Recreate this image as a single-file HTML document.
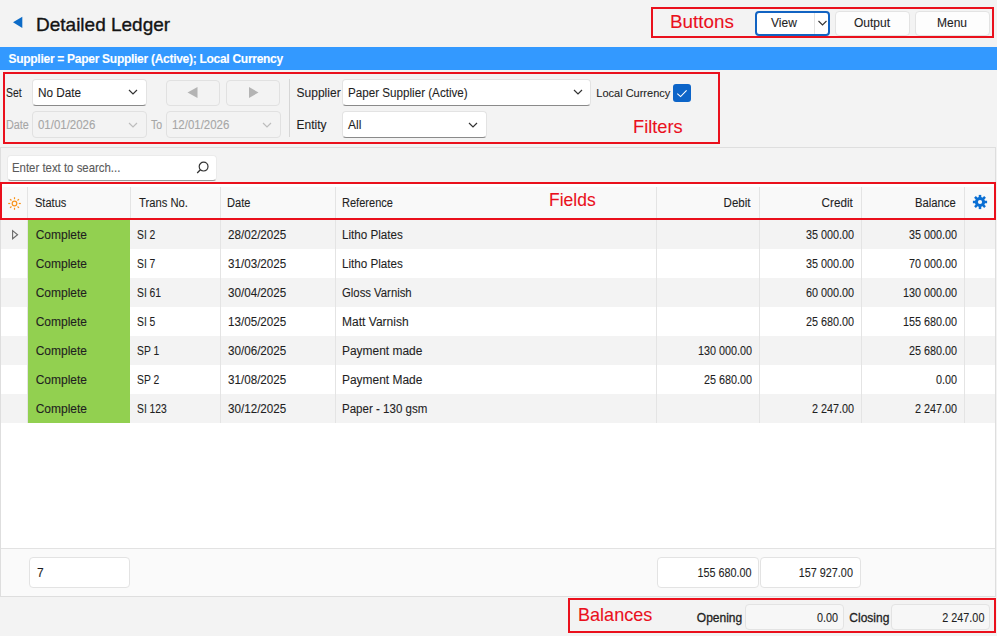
<!DOCTYPE html>
<html><head><meta charset="utf-8">
<style>
*{box-sizing:border-box;margin:0;padding:0}
html,body{width:997px;height:636px;overflow:hidden;background:#f3f3f3;font-family:"Liberation Sans",sans-serif;color:#1f1f1f;position:relative}
.a{position:absolute}
.t{position:absolute;line-height:1;white-space:nowrap;font-size:12px;-webkit-text-stroke:0.1px currentColor}
.red{border:2px solid #ea101c;position:absolute}
.rt{color:#ea101c;font-size:18px}
.dd{position:absolute;background:#fff;border:1px solid #e3e3e3;border-bottom:1px solid #8a8a8a;border-radius:4px}
.dis{position:absolute;background:#f3f3f3;border:1px solid #e1e1e1;border-radius:4px}
.btn{position:absolute;background:#fdfdfd;border:1px solid #e3e3e3;border-radius:4px}
.g{color:#a6a6a6}
.vl{position:absolute;width:1px;background:#e4e4e4}
.row{position:absolute;left:1px;width:994px;height:29px}
.num{text-align:right}
.sn{transform:scaleX(0.9);transform-origin:right center}
.sl{transform-origin:left center}
.sr{transform-origin:right center}
</style></head><body>

<!-- Title -->
<svg class="a" style="left:0;top:0" width="30" height="40"><polygon points="13,22.3 22.3,16.7 22.3,28" fill="#0c6bc7"/></svg>
<div class="t" style="left:36px;top:15px;font-size:19px;color:#141414;-webkit-text-stroke:0.35px #141414">Detailed Ledger</div>

<!-- Buttons -->
<div class="a" style="left:755px;top:11px;width:75px;height:25px;background:#fff;border:2px solid #1163c2;border-radius:4px"></div>
<div class="a" style="left:814px;top:13px;width:1px;height:21px;background:#e3e3e3"></div>
<div class="t" style="left:771px;top:16.5px">View</div>
<svg class="a" style="left:816px;top:18px" width="12" height="10"><polyline points="2.5,3 6.5,7 10.5,3" fill="none" stroke="#333" stroke-width="1.1"/></svg>
<div class="btn" style="left:835px;top:11px;width:75px;height:25px"></div>
<div class="t" style="left:854px;top:16.5px">Output</div>
<div class="btn" style="left:915px;top:11px;width:75px;height:25px"></div>
<div class="t" style="left:937px;top:16.5px">Menu</div>
<div class="red" style="left:651px;top:7px;width:343px;height:31px"></div>
<div class="t rt sl" style="left:669.8px;top:11.8px;font-size:19px;transform:scaleX(0.99)">Buttons</div>

<!-- Blue bar -->
<div class="a" style="left:0;top:47px;width:997px;height:23px;background:#3399ff"></div>
<div class="t" style="left:8.5px;top:52.8px;font-size:12px;font-weight:bold;color:#fff;letter-spacing:-0.28px">Supplier = Paper Supplier (Active); Local Currency</div>

<!-- Filters -->
<div class="t sl" style="left:6px;top:86.8px;transform:scaleX(0.87)">Set</div>
<div class="dd" style="left:32px;top:79px;width:115px;height:27px"></div>
<div class="t sl" style="left:38px;top:86.5px;font-size:12.5px;transform:scaleX(0.94)">No Date</div>
<svg class="a" style="left:126px;top:87px" width="14" height="10"><polyline points="3,3 7,7 11,3" fill="none" stroke="#333" stroke-width="1.2"/></svg>

<div class="dis" style="left:166px;top:80px;width:54px;height:26px"></div>
<svg class="a" style="left:166px;top:80px" width="54" height="25"><polygon points="21.5,12.5 31.5,7 31.5,18" fill="#b4b4b4"/></svg>
<div class="dis" style="left:226px;top:80px;width:54px;height:26px"></div>
<svg class="a" style="left:226px;top:80px" width="54" height="25"><polygon points="32.5,12.5 23,7 23,18" fill="#b4b4b4"/></svg>

<div class="t g sl" style="left:6.3px;top:118.8px;transform:scaleX(0.9)">Date</div>
<div class="dis" style="left:32px;top:111px;width:115px;height:27px"></div>
<div class="t g sl" style="left:37.5px;top:118.8px;font-size:12px;transform:scaleX(0.955)">01/01/2026</div>
<svg class="a" style="left:126px;top:119.5px" width="14" height="10"><polyline points="3,3 7,7 11,3" fill="none" stroke="#bdbdbd" stroke-width="1.2"/></svg>
<div class="t g sl" style="left:151px;top:118.8px;transform:scaleX(0.88)">To</div>
<div class="dis" style="left:166px;top:111px;width:115px;height:27px"></div>
<div class="t g sl" style="left:171.5px;top:118.8px;font-size:12px;transform:scaleX(0.955)">12/01/2026</div>
<svg class="a" style="left:260px;top:119.5px" width="14" height="10"><polyline points="3,3 7,7 11,3" fill="none" stroke="#bdbdbd" stroke-width="1.2"/></svg>

<div class="a" style="left:289px;top:79px;width:1px;height:58px;background:#d6d6d6"></div>

<div class="t" style="left:296.6px;top:86.8px">Supplier</div>
<div class="dd" style="left:342px;top:79px;width:249px;height:27px"></div>
<div class="t sl" style="left:348px;top:86.8px;font-size:12px;transform:scaleX(0.97)">Paper Supplier (Active)</div>
<svg class="a" style="left:571px;top:87px" width="14" height="10"><polyline points="3,3 7,7 11,3" fill="none" stroke="#333" stroke-width="1.2"/></svg>
<div class="t" style="left:596.3px;top:87.7px;font-size:11px">Local Currency</div>
<div class="a" style="left:673px;top:84px;width:18px;height:18px;background:#0c64c8;border-radius:3px"></div>
<svg class="a" style="left:673px;top:84px" width="18" height="18"><polyline points="4.3,9.6 7.6,12.6 13.6,6.3" fill="none" stroke="#fff" stroke-width="1.1"/></svg>

<div class="t" style="left:296.6px;top:118.8px">Entity</div>
<div class="dd" style="left:342px;top:111px;width:145px;height:27px"></div>
<div class="t" style="left:348px;top:118.8px">All</div>
<svg class="a" style="left:466px;top:119.5px" width="14" height="10"><polyline points="3,3 7,7 11,3" fill="none" stroke="#333" stroke-width="1.2"/></svg>

<div class="red" style="left:3px;top:72px;width:717px;height:72px"></div>
<div class="t rt sl" style="left:633.3px;top:116.5px;font-size:19px;transform:scaleX(0.96)">Filters</div>

<!-- Grid panel -->
<div class="a" style="left:0;top:147px;width:996px;height:450px;border:1px solid #dedede;background:#fff"></div>
<div class="a" style="left:1px;top:148px;width:994px;height:36px;background:#f3f3f3"></div>
<div class="a" style="left:7px;top:155px;width:210px;height:26px;background:#fff;border:1px solid #ebebeb;border-bottom:1px solid #9a9a9a;border-radius:4px"></div>
<div class="t sl" style="left:12.4px;top:161.8px;font-size:12.4px;color:#5a5a5a;transform:scaleX(0.92)">Enter text to search...</div>
<svg class="a" style="left:195px;top:160px" width="16" height="16"><circle cx="8.6" cy="6.6" r="4.4" fill="none" stroke="#333" stroke-width="1.2"/><line x1="5.4" y1="9.8" x2="2.2" y2="13" stroke="#333" stroke-width="1.3"/></svg>

<!-- header -->
<div class="a" style="left:1px;top:187px;width:994px;height:32px;background:#f9f9f9"></div>
<div class="vl" style="left:27px;top:187px;height:32px"></div>
<div class="vl" style="left:130px;top:187px;height:32px"></div>
<div class="vl" style="left:220px;top:187px;height:32px"></div>
<div class="vl" style="left:335px;top:187px;height:32px"></div>
<div class="vl" style="left:656px;top:187px;height:32px"></div>
<div class="vl" style="left:759px;top:187px;height:32px"></div>
<div class="vl" style="left:861px;top:187px;height:32px"></div>
<div class="vl" style="left:964px;top:187px;height:32px"></div>
<svg class="a" style="left:6px;top:195px" width="17" height="17"><g stroke="#f7941d" stroke-width="1.2" fill="none"><circle cx="8.5" cy="8.5" r="2.3"/><line x1="12.80" y1="8.50" x2="14.80" y2="8.50"/><line x1="11.54" y1="11.54" x2="12.95" y2="12.95"/><line x1="8.50" y1="12.80" x2="8.50" y2="14.80"/><line x1="5.46" y1="11.54" x2="4.05" y2="12.95"/><line x1="4.20" y1="8.50" x2="2.20" y2="8.50"/><line x1="5.46" y1="5.46" x2="4.05" y2="4.05"/><line x1="8.50" y1="4.20" x2="8.50" y2="2.20"/><line x1="11.54" y1="5.46" x2="12.95" y2="4.05"/></g></svg>
<div class="t sl" style="left:34.8px;top:196.8px;transform:scaleX(0.92)">Status</div>
<div class="t sl" style="left:138.7px;top:196.8px;transform:scaleX(0.935)">Trans No.</div>
<div class="t sl" style="left:227px;top:196.8px;transform:scaleX(0.925)">Date</div>
<div class="t sl" style="left:342.2px;top:196.8px;transform:scaleX(0.92)">Reference</div>
<div class="t num sr" style="left:650px;width:100.5px;top:196.8px;transform:scaleX(0.96)">Debit</div>
<div class="t num sr" style="left:752px;width:100.8px;top:196.8px;transform:scaleX(0.975)">Credit</div>
<div class="t num sr" style="left:855px;width:100.8px;top:196.8px;transform:scaleX(0.94)">Balance</div>
<svg class="a" style="left:970px;top:192px" width="20" height="20" viewBox="-10 -10 20 20"><g fill="#0b6fd3"><circle r="5.1"/><rect x="-1.25" y="-7.1" width="2.5" height="4" transform="rotate(0)"/><rect x="-1.25" y="-7.1" width="2.5" height="4" transform="rotate(45)"/><rect x="-1.25" y="-7.1" width="2.5" height="4" transform="rotate(90)"/><rect x="-1.25" y="-7.1" width="2.5" height="4" transform="rotate(135)"/><rect x="-1.25" y="-7.1" width="2.5" height="4" transform="rotate(180)"/><rect x="-1.25" y="-7.1" width="2.5" height="4" transform="rotate(225)"/><rect x="-1.25" y="-7.1" width="2.5" height="4" transform="rotate(270)"/><rect x="-1.25" y="-7.1" width="2.5" height="4" transform="rotate(315)"/></g><circle r="2.1" fill="#f9f9f9"/></svg>
<div class="red" style="left:0;top:182px;width:996px;height:38px"></div>
<div class="t rt sl" style="left:548.7px;top:189.6px;font-size:19px;transform:scaleX(0.92)">Fields</div>

<!-- rows -->
<!--ROWS-->
<div class="row" style="top:220px;background:#f3f3f3"></div>
<div class="a" style="left:28px;top:220px;width:102px;height:29px;background:#92d050"></div>
<div class="t" style="left:35.7px;top:228.84px">Complete</div>
<div class="t sl" style="left:137.4px;top:228.84px;transform:scaleX(0.86)">SI 2</div>
<div class="t sl" style="left:228px;top:228.84px;transform:scaleX(0.97)">28/02/2025</div>
<div class="t sl" style="left:342.1px;top:228.84px;transform:scaleX(0.97)">Litho Plates</div>
<div class="t num sn" style="left:752px;width:102px;top:228.84px">35 000.00</div>
<div class="t num sn" style="left:855px;width:102px;top:228.84px">35 000.00</div>
<div class="row" style="top:249px;background:#ffffff"></div>
<div class="a" style="left:28px;top:249px;width:102px;height:29px;background:#92d050"></div>
<div class="t" style="left:35.7px;top:257.84px">Complete</div>
<div class="t sl" style="left:137.4px;top:257.84px;transform:scaleX(0.86)">SI 7</div>
<div class="t sl" style="left:228px;top:257.84px;transform:scaleX(0.97)">31/03/2025</div>
<div class="t sl" style="left:342.1px;top:257.84px;transform:scaleX(0.97)">Litho Plates</div>
<div class="t num sn" style="left:752px;width:102px;top:257.84px">35 000.00</div>
<div class="t num sn" style="left:855px;width:102px;top:257.84px">70 000.00</div>
<div class="row" style="top:278px;background:#f3f3f3"></div>
<div class="a" style="left:28px;top:278px;width:102px;height:29px;background:#92d050"></div>
<div class="t" style="left:35.7px;top:286.84px">Complete</div>
<div class="t sl" style="left:137.4px;top:286.84px;transform:scaleX(0.86)">SI 61</div>
<div class="t sl" style="left:228px;top:286.84px;transform:scaleX(0.97)">30/04/2025</div>
<div class="t sl" style="left:342.1px;top:286.84px;transform:scaleX(0.944)">Gloss Varnish</div>
<div class="t num sn" style="left:752px;width:102px;top:286.84px">60 000.00</div>
<div class="t num sn" style="left:855px;width:102px;top:286.84px">130 000.00</div>
<div class="row" style="top:307px;background:#ffffff"></div>
<div class="a" style="left:28px;top:307px;width:102px;height:29px;background:#92d050"></div>
<div class="t" style="left:35.7px;top:315.84px">Complete</div>
<div class="t sl" style="left:137.4px;top:315.84px;transform:scaleX(0.86)">SI 5</div>
<div class="t sl" style="left:228px;top:315.84px;transform:scaleX(0.97)">13/05/2025</div>
<div class="t sl" style="left:342.1px;top:315.84px;transform:scaleX(1.0)">Matt Varnish</div>
<div class="t num sn" style="left:752px;width:102px;top:315.84px">25 680.00</div>
<div class="t num sn" style="left:855px;width:102px;top:315.84px">155 680.00</div>
<div class="row" style="top:336px;background:#f3f3f3"></div>
<div class="a" style="left:28px;top:336px;width:102px;height:29px;background:#92d050"></div>
<div class="t" style="left:35.7px;top:344.84px">Complete</div>
<div class="t sl" style="left:137.4px;top:344.84px;transform:scaleX(0.86)">SP 1</div>
<div class="t sl" style="left:228px;top:344.84px;transform:scaleX(0.97)">30/06/2025</div>
<div class="t sl" style="left:342.1px;top:344.84px;transform:scaleX(0.995)">Payment made</div>
<div class="t num sn" style="left:650px;width:102px;top:344.84px">130 000.00</div>
<div class="t num sn" style="left:855px;width:102px;top:344.84px">25 680.00</div>
<div class="row" style="top:365px;background:#ffffff"></div>
<div class="a" style="left:28px;top:365px;width:102px;height:29px;background:#92d050"></div>
<div class="t" style="left:35.7px;top:373.84px">Complete</div>
<div class="t sl" style="left:137.4px;top:373.84px;transform:scaleX(0.86)">SP 2</div>
<div class="t sl" style="left:228px;top:373.84px;transform:scaleX(0.97)">31/08/2025</div>
<div class="t sl" style="left:342.1px;top:373.84px;transform:scaleX(0.995)">Payment Made</div>
<div class="t num sn" style="left:650px;width:102px;top:373.84px">25 680.00</div>
<div class="t num sn" style="left:855px;width:102px;top:373.84px">0.00</div>
<div class="row" style="top:394px;background:#f3f3f3"></div>
<div class="a" style="left:28px;top:394px;width:102px;height:29px;background:#92d050"></div>
<div class="t" style="left:35.7px;top:402.84px">Complete</div>
<div class="t sl" style="left:137.4px;top:402.84px;transform:scaleX(0.86)">SI 123</div>
<div class="t sl" style="left:228px;top:402.84px;transform:scaleX(0.97)">30/12/2025</div>
<div class="t sl" style="left:342.1px;top:402.84px;transform:scaleX(0.962)">Paper - 130 gsm</div>
<div class="t num sn" style="left:752px;width:102px;top:402.84px">2 247.00</div>
<div class="t num sn" style="left:855px;width:102px;top:402.84px">2 247.00</div>
<div class="vl" style="left:27px;top:220px;height:203px"></div>
<div class="vl" style="left:220px;top:220px;height:203px"></div>
<div class="vl" style="left:335px;top:220px;height:203px"></div>
<div class="vl" style="left:656px;top:220px;height:203px"></div>
<div class="vl" style="left:759px;top:220px;height:203px"></div>
<div class="vl" style="left:861px;top:220px;height:203px"></div>
<div class="vl" style="left:964px;top:220px;height:203px"></div>
<svg class="a" style="left:10px;top:228px" width="10" height="13"><polygon points="2.6,2.6 7.6,6.7 2.6,10.8" fill="none" stroke="#6a6a6a" stroke-width="1.1"/></svg>
<!--/ROWS-->

<!-- footer -->
<div class="a" style="left:1px;top:548px;width:994px;height:48px;background:#fafafa;border-top:1px solid #e2e2e2"></div>
<div class="a" style="left:29px;top:557px;width:101px;height:31px;background:#fff;border:1px solid #e3e3e3;border-radius:4px"></div>
<div class="t" style="left:37px;top:567px">7</div>
<div class="a" style="left:657px;top:557px;width:102px;height:31px;background:#fff;border:1px solid #e3e3e3;border-radius:4px"></div>
<div class="t num sn" style="left:650px;width:101.6px;top:567px">155 680.00</div>
<div class="a" style="left:760px;top:557px;width:101px;height:31px;background:#fff;border:1px solid #e3e3e3;border-radius:4px"></div>
<div class="t num sn" style="left:752px;width:100.9px;top:567px">157 927.00</div>

<!-- bottom bar -->
<div class="a" style="left:0;top:597px;width:997px;height:39px;background:#f3f3f3"></div>
<div class="t" style="left:696.8px;top:612px;-webkit-text-stroke:0.3px #1f1f1f">Opening</div>
<div class="a" style="left:745px;top:604px;width:99px;height:26px;background:#f7f7f7;border:1px solid #e3e3e3;border-radius:4px"></div>
<div class="t num sn" style="left:740px;width:98px;top:612px">0.00</div>
<div class="t" style="left:849.3px;top:612px;-webkit-text-stroke:0.3px #1f1f1f">Closing</div>
<div class="a" style="left:891px;top:604px;width:99px;height:26px;background:#f7f7f7;border:1px solid #e3e3e3;border-radius:4px"></div>
<div class="t num sn" style="left:880px;width:104.4px;top:612px">2 247.00</div>
<div class="red" style="left:568px;top:598px;width:428px;height:35px"></div>
<div class="t rt sl" style="left:577.8px;top:604.6px;font-size:19px;transform:scaleX(0.95)">Balances</div>

</body></html>
